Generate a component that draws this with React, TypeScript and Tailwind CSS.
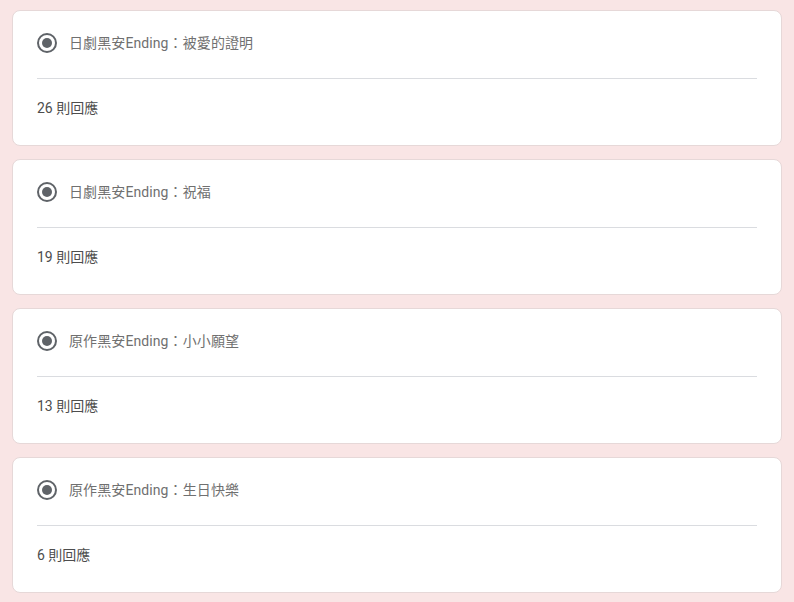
const items = [
  { title: '日劇黑安Ending：被愛的證明', count: 26 },
  { title: '日劇黑安Ending：祝福', count: 19 },
  { title: '原作黑安Ending：小小願望', count: 13 },
  { title: '原作黑安Ending：生日快樂', count: 6 },
];

function Radio() {
  return (
    <svg width="20" height="20" viewBox="0 0 20 20" className="shrink-0">
      <circle cx="10" cy="10" r="9" fill="none" stroke="#5f6368" strokeWidth="2" />
      <circle cx="10" cy="10" r="5" fill="#5f6368" />
    </svg>
  );
}

export default function App() {
  return (
    <div
      className="min-h-screen bg-[#f9e5e5] px-3 pt-[10px] pb-4 flex flex-col gap-[13px]"
      style={{ fontFamily: 'Roboto, "Noto Sans CJK TC", sans-serif' }}
    >
      {items.map((it) => (
        <div key={it.title} className="bg-white border border-[#e6d8d8] rounded-lg px-6 pt-[22px] pb-[27px]">
          <div className="flex items-center gap-3 h-5">
            <Radio />
            <span className="text-sm text-[#707070] tracking-[0.1px]">{it.title}</span>
          </div>
          <div className="mt-[25px] border-t border-[#dadce0] pt-[19px]">
            <div className="h-5 leading-5 text-sm text-[#4d4d4d]">{it.count} 則回應</div>
          </div>
        </div>
      ))}
    </div>
  );
}
